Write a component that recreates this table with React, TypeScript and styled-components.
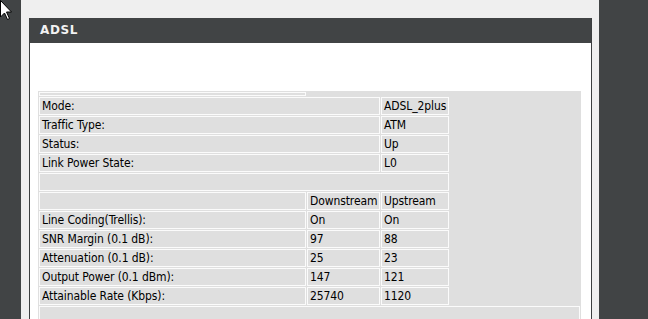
import React from "react";
import styled, { createGlobalStyle } from "styled-components";

const GlobalStyle = createGlobalStyle`
  html, body {
    margin: 0;
    padding: 0;
    background: #efefef;
    font-family: "DejaVu Sans Condensed", "DejaVu Sans", sans-serif;
  }
`;

const Page = styled.div`
  position: relative;
  display: flex;
  height: 319px;
  overflow: hidden;
`;

const SideBar = styled.div`
  width: 21px;
  flex-shrink: 0;
  background: #414445;
`;

const Main = styled.div`
  flex: 1;
  background: #efefef;
  padding: 18px 7px 0 8px;
  display: flex;
  flex-direction: column;
`;

const RightBar = styled.div`
  width: 49px;
  flex-shrink: 0;
  background: #414445;
`;

const Panel = styled.section`
  flex: 1;
  background: #fff;
  border-left: 1px solid #3c3f40;
  border-right: 1px solid #3c3f40;
`;

const PanelHeader = styled.h2`
  margin: 0;
  height: 25px;
  line-height: 25px;
  padding-left: 10px;
  background: #414445;
  color: #f2f2f2;
  font-size: 12px;
  font-weight: bold;
  letter-spacing: 0.6px;
  font-family: "DejaVu Sans", sans-serif;
`;

const PanelBody = styled.div`
  padding: 48px 0 0 8px;
`;

const Table = styled.table`
  table-layout: fixed;
  width: 543px;
  border-collapse: separate;
  border-spacing: 1px;
  background: #dfdfdf;
`;

const Cell = styled.td<{ $thin?: boolean }>`
  border: 1px solid #fbfbfb;
  padding: 0 0 0 2px;
  height: ${(p) => (p.$thin ? "2px" : "16px")};
  line-height: ${(p) => (p.$thin ? "0" : "16px")};
  font-size: ${(p) => (p.$thin ? "0" : "12px")};
  letter-spacing: -0.1px;
  color: #000;
  white-space: nowrap;
  vertical-align: middle;
`;

const Cursor = styled.svg`
  position: absolute;
  left: 0;
  top: 0;
`;

const status = [
  ["Mode:", "ADSL_2plus"],
  ["Traffic Type:", "ATM"],
  ["Status:", "Up"],
  ["Link Power State:", "L0"],
];

const stats = [
  ["", "Downstream", "Upstream"],
  ["Line Coding(Trellis):", "On", "On"],
  ["SNR Margin (0.1 dB):", "97", "88"],
  ["Attenuation (0.1 dB):", "25", "23"],
  ["Output Power (0.1 dBm):", "147", "121"],
  ["Attainable Rate (Kbps):", "25740", "1120"],
];

export default function App() {
  return (
    <Page>
      <GlobalStyle />
      <SideBar />
      <Main>
        <Panel>
          <PanelHeader>ADSL</PanelHeader>
          <PanelBody>
            <Table>
              <colgroup>
                <col style={{ width: 267 }} />
                <col style={{ width: 73 }} />
                <col style={{ width: 68 }} />
                <col style={{ width: 130 }} />
              </colgroup>
              <tbody>
                <tr>
                  <Cell $thin />
                </tr>
                {status.map(([label, value]) => (
                  <tr key={label}>
                    <Cell colSpan={2}>{label}</Cell>
                    <Cell>{value}</Cell>
                  </tr>
                ))}
                <tr>
                  <Cell colSpan={3} />
                </tr>
                {stats.map(([label, down, up], i) => (
                  <tr key={i}>
                    <Cell>{label}</Cell>
                    <Cell>{down}</Cell>
                    <Cell>{up}</Cell>
                  </tr>
                ))}
                <tr>
                  <Cell colSpan={4} />
                </tr>
              </tbody>
            </Table>
          </PanelBody>
        </Panel>
      </Main>
      <RightBar />
      <Cursor width="13" height="21" viewBox="0 0 13 21">
        <path
          d="M0.5 0.5 L0.5 17 L4.5 13 L7.5 19.5 L9.5 18.5 L6.5 12 L11.5 12 Z"
          fill="#fff"
          stroke="#000"
          strokeWidth="1"
        />
      </Cursor>
    </Page>
  );
}
